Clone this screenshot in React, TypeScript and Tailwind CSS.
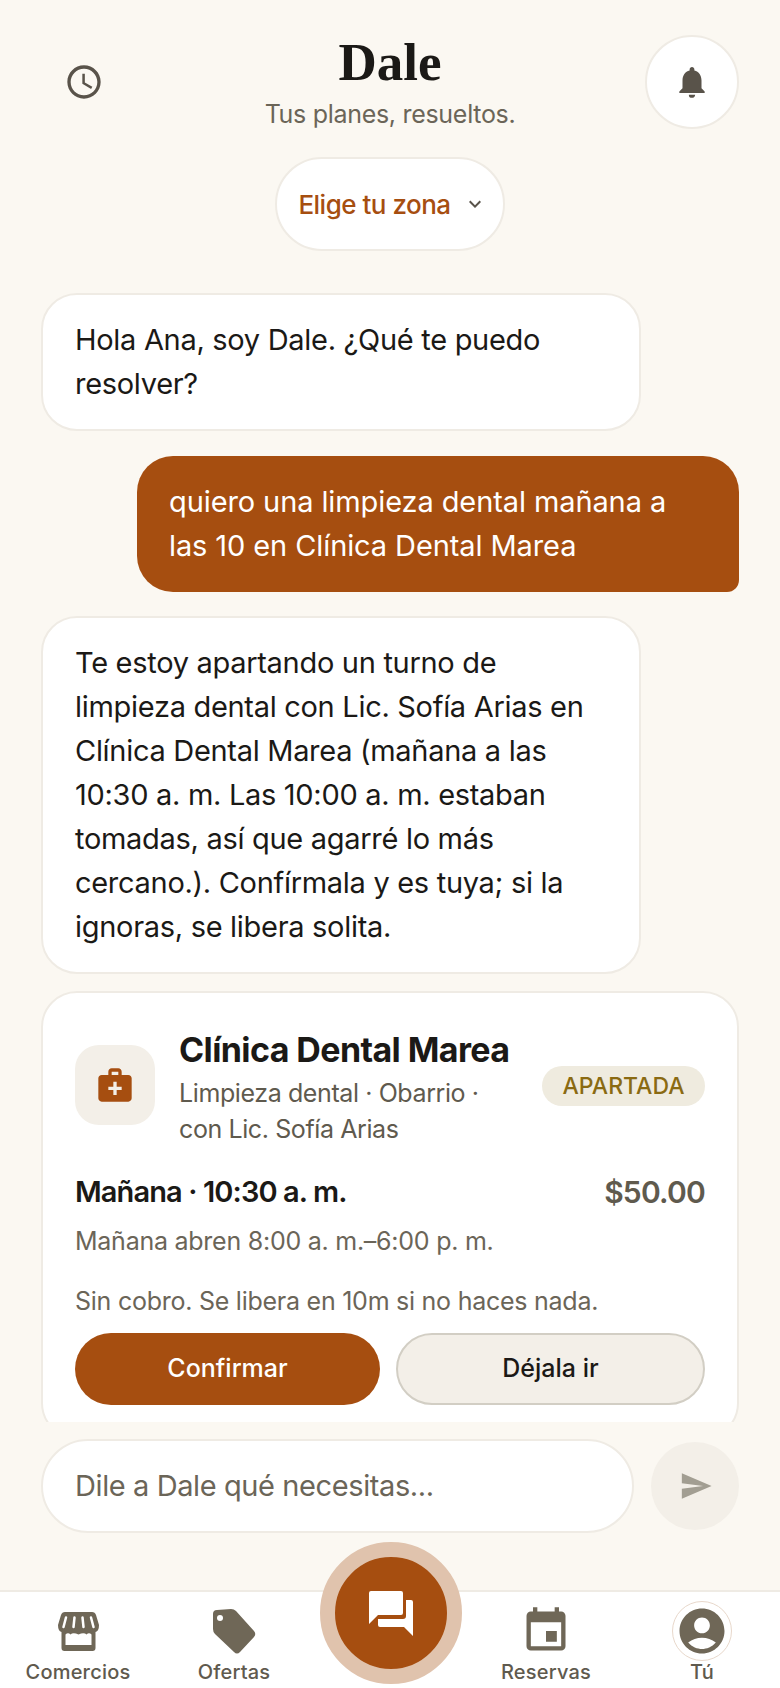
import React from 'react';
import {
  MdAccountCircle,
  MdEvent,
  MdExpandMore,
  MdMedicalServices,
  MdNotifications,
  MdSchedule,
  MdSend,
} from 'react-icons/md';

function StoreIcon(): React.JSX.Element {
  return (
    <svg width="41" height="39" viewBox="0 0 41 39" fill="none">
      <path
        d="M7 0H34Q37 0 38 3L41 13Q41 19 37.5 20V36Q37.5 39 34.5 39H6.5Q3.500 39 3.500 36V20Q0 19 0 13L3 3Q4 0 7 0Z"
        fill="#6f6757"
      />
      <path d="M7.500 22.500Q10 20 12.500 22.500Q15 20 20.500 22.500Q26 20 28.500 22.500Q31 20 33.500 22.500V33H7.500Z" fill="#fff" />
      <path d="M8 5.500L5.500 15M16.500 5.500L15.500 15M24.500 5.500L25.500 15M33 5.500L35.500 15" stroke="#fff" strokeWidth="2.500" strokeLinecap="round" />
    </svg>
  );
}

function TagIcon(): React.JSX.Element {
  return (
    <svg width="44" height="45" viewBox="0 0 44 45">
      <path
        d="M5 1L19 0Q22 0 24 2L42 22Q44.500 25 42 28L28 43Q25 46 22 43L3 25Q1 23 1 20V5Q1 1 5 1Z"
        fill="#6f6757"
      />
      <circle cx="8" cy="9" r="3" fill="#fff" />
    </svg>
  );
}

function ChatIcon(): React.JSX.Element {
  return (
    <svg width="44" height="45" viewBox="0 0 44 45" fill="#fff">
      <path d="M2 0H32Q34 0 34 2V22Q34 24 32 24H9L0 33V2Q0 0 2 0Z" />
      <path d="M37 9H42Q44 9 44 11V45L35 36H11Q9 36 9 34V28H34Q37 28 37 25Z" />
    </svg>
  );
}

function NavItem({ icon, label }: { icon: React.ReactNode; label: string }): React.JSX.Element {
  return (
    <div className="flex flex-col items-center text-[#6f6757]">
      <div className="flex h-[58px] items-center justify-center">{icon}</div>
      <span className="text-[20px] leading-[24px] font-medium tracking-[0.2px] text-[#5f5a4e]">{label}</span>
    </div>
  );
}

export default function App(): React.JSX.Element {
  return (
    <div className="flex h-[1688px] w-[780px] flex-col overflow-hidden bg-[#fbf8f2] font-['Inter',sans-serif] text-[#1b1916]">
      {/* Header */}
      <header className="grid h-[157px] shrink-0 grid-cols-[1fr_auto_1fr] items-start px-[41px]">
        <MdSchedule className="mt-[62px] ml-[23px] text-[#59534a]" size={40} />
        <div className="flex flex-col items-center pt-[32px]">
          <h1 className="font-['Liberation_Serif',serif] text-[53px] leading-[60px] font-bold">Dale</h1>
          <p className="mt-[5px] text-[25px] leading-[34px] tracking-[-0.3px] text-[#6b6558]">Tus planes, resueltos.</p>
        </div>
        <button className="mt-[35px] flex h-[94px] w-[94px] items-center justify-center justify-self-end rounded-full border-2 border-[#efebe4] bg-white">
          <MdNotifications className="text-[#59534a]" size={38} />
        </button>
      </header>

      <div className="flex shrink-0 justify-center">
        <button className="flex h-[94px] w-[230px] items-center justify-center gap-[12px] rounded-full border-2 border-[#efebe4] bg-white pl-[5px]">
          <span className="text-[26px] font-medium tracking-[-0.5px] text-[#a64e10]">Elige tu zona</span>
          <MdExpandMore className="text-[#59534a]" size={24} />
        </button>
      </div>

      {/* Conversation */}
      <main className="flex min-h-0 flex-1 flex-col overflow-hidden px-[41px] pt-[42px]">
        <div className="w-[600px] rounded-[36px] border-2 border-[#efebe4] bg-white px-[32px] py-[23px] text-[29px] leading-[44px] tracking-[-0.3px]">
          Hola Ana, soy Dale. ¿Qué te puedo resolver?
        </div>
        <div className="mt-[25px] w-[602px] self-end rounded-[36px] rounded-br-[12px] bg-[#a64e10] py-[24px] pr-[48px] pl-[32px] text-[29px] leading-[44px] tracking-[-0.1px] text-white">
          quiero una limpieza dental mañana a las 10 en Clínica Dental Marea
        </div>
        <div className="mt-[24px] w-[600px] rounded-[36px] border-2 border-[#efebe4] bg-white px-[32px] py-[23px] text-[29px] leading-[44px] tracking-[-0.3px]">
          Te estoy apartando un turno de limpieza dental con Lic. Sofía Arias en Clínica Dental Marea (mañana a las 10:30
          a. m. Las 10:00 a. m. estaban tomadas, así que agarré lo más cercano.). Confírmala y es tuya; si la ignoras, se
          libera solita.
        </div>

        {/* Reservation card */}
        <section className="mt-[17px] shrink-0 rounded-[36px] border-2 border-[#efebe4] bg-white px-[32px] pt-[32px] pb-[32px]">
          <div className="flex items-start">
            <div className="mt-[20px] flex h-[80px] w-[80px] shrink-0 items-center justify-center rounded-[24px] bg-[#f3efe8]">
              <MdMedicalServices className="text-[#a64e10]" size={40} />
            </div>
            <div className="ml-[24px] min-w-0 flex-1 pt-[3px]">
              <h2 className="text-[34px] leading-[44px] font-bold tracking-[-0.6px] whitespace-nowrap">Clínica Dental Marea</h2>
              <p className="mt-[3px] w-[300px] text-[25px] leading-[36px] tracking-[-0.4px] text-[#5f5a4e]">
                Limpieza dental · Obarrio · con Lic. Sofía Arias
              </p>
            </div>
            <span className="mt-[41px] flex h-[40px] w-[163px] shrink-0 items-center justify-center rounded-full bg-[#efebdf] text-[23px] font-medium text-[#8a6a12]">
              APARTADA
            </span>
          </div>
          <div className="mt-[23px] flex items-center justify-between">
            <span className="text-[29px] leading-[44px] font-semibold tracking-[-0.9px]">Mañana · 10:30 a. m.</span>
            <span className="text-[30px] leading-[44px] font-semibold tracking-[-0.8px] text-[#5f5a4e]">$50.00</span>
          </div>
          <p className="mt-[9px] text-[25px] leading-[36px] tracking-[-0.25px] text-[#6b6558]">
            Mañana abren 8:00 a. m.–6:00 p. m.
          </p>
          <p className="mt-[24px] text-[25px] leading-[36px] tracking-[-0.25px] text-[#6b6558]">
            Sin cobro. Se libera en 10m si no haces nada.
          </p>
          <div className="mt-[14px] flex gap-[16px]">
            <button className="h-[72px] flex-1 rounded-full bg-[#a64e10] text-[25px] font-medium text-white">Confirmar</button>
            <button className="h-[72px] flex-1 rounded-full border-2 border-[#d2cec4] bg-[#f3efe8] text-[25px] font-medium">
              Déjala ir
            </button>
          </div>
        </section>
      </main>

      {/* Composer */}
      <div className="flex h-[168px] shrink-0 items-start gap-[17px] px-[41px] pt-[17px]">
        <div className="flex h-[94px] flex-1 items-center rounded-full border-2 border-[#efebe4] bg-white px-[32px] text-[29px] tracking-[-0.4px] text-[#6b6558]">
          Dile a Dale qué necesitas...
        </div>
        <button className="mt-[3px] flex h-[88px] w-[88px] shrink-0 items-center justify-center rounded-full bg-[#f3efe8]">
          <MdSend className="ml-[2px] text-[#a29e92]" size={34} />
        </button>
      </div>

      {/* Bottom nav */}
      <nav className="relative grid h-[98px] shrink-0 grid-cols-5 border-t-2 border-[#efebe4] bg-white pt-[10px]">
        <NavItem icon={<StoreIcon />} label="Comercios" />
        <NavItem icon={<TagIcon />} label="Ofertas" />
        <div />
        <NavItem icon={<MdEvent size={52} />} label="Reservas" />
        <NavItem
          icon={
            <span className="flex h-[60px] w-[60px] items-center justify-center rounded-full border border-[#e8d8cb]">
              <MdAccountCircle size={54} />
            </span>
          }
          label="Tú"
        />
        <button className="absolute top-[-50px] left-[320px] flex h-[142px] w-[142px] items-center justify-center rounded-full border-[15px] border-[#e0c3ad] bg-[#a64e10]">
          <ChatIcon />
        </button>
      </nav>
    </div>
  );
}
